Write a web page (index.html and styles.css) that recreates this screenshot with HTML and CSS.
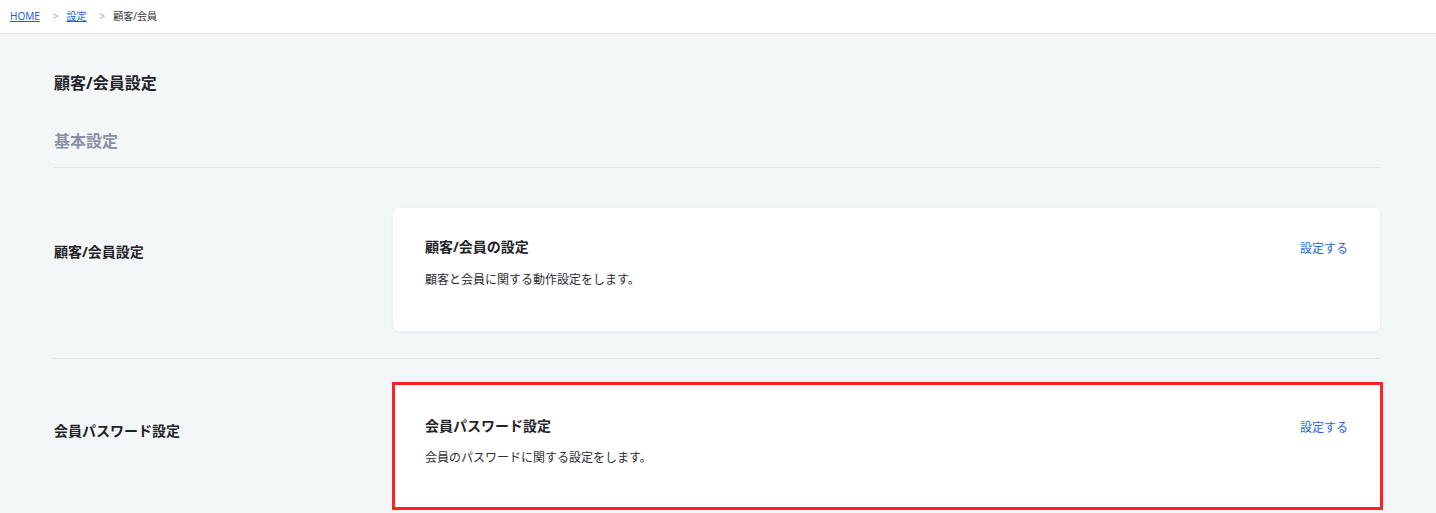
FILE: index.html
```html
<!DOCTYPE html>
<html lang="ja">
<head>
<meta charset="utf-8">
<title>顧客/会員設定</title>
<link rel="stylesheet" href="styles.css">
</head>
<body>
<nav class="crumbs">
  <a class="crumb-link" href="#">HOME</a>
  <span class="crumb-sep">&gt;</span>
  <a class="crumb-link" href="#">設定</a>
  <span class="crumb-sep">&gt;</span>
  <span class="crumb-current">顧客/会員</span>
</nav>
<main class="page">
  <h1 class="page-title">顧客/会員設定</h1>
  <h2 class="section-title">基本設定</h2>

  <section class="row row-first">
    <div class="row-label">顧客/会員設定</div>
    <div class="card">
      <div class="card-head">
        <h3 class="card-title">顧客/会員の設定</h3>
        <a class="card-link" href="#">設定する</a>
      </div>
      <p class="card-desc">顧客と会員に関する動作設定をします。</p>
    </div>
  </section>

  <section class="row row-second">
    <div class="row-label row-label-hl">会員パスワード設定</div>
    <div class="card card-hl">
      <div class="card-head">
        <h3 class="card-title">会員パスワード設定</h3>
        <a class="card-link" href="#">設定する</a>
      </div>
      <p class="card-desc card-desc-hl">会員のパスワードに関する設定をします。</p>
    </div>
  </section>
</main>
</body>
</html>
```
FILE: styles.css
```css
* { box-sizing: border-box; }
html, body { margin: 0; padding: 0; }
body {
  font-family: "Noto Sans", "Noto Sans CJK JP", sans-serif;
  background: #f4f7f8;
  color: #1f2329;
  overflow: hidden;
}
.crumbs {
  height: 34px;
  background: #fff;
  border-bottom: 1px solid #dfe1e6;
  display: flex;
  align-items: center;
  padding: 0 0 1px 10px;
  font-size: 10px;
  line-height: 14px;
}
.crumb-link { color: #1a5fd6; text-decoration: underline; }
.crumb-sep { color: #a0a4ac; margin: 0 8px 0 13px; }
.crumb-current { color: #333; }

.page { padding: 37px 56px 0 54px; }
.page-title {
  margin: 0;
  font-size: 16px;
  line-height: 24px;
  font-weight: 700;
  color: #1f2329;
}
.section-title {
  margin: 34px 0 0;
  padding-bottom: 14px;
  font-size: 16px;
  line-height: 24px;
  font-weight: 700;
  color: #8a91a6;
  border-bottom: 1px solid #e0e2e6;
}
.row {
  display: grid;
  grid-template-columns: 339px 1fr;
  align-items: start;
  border-bottom: 1px solid #e0e2e6;
}
.row-first { padding: 40px 0 27px; }
.row-second { padding: 23px 0 30px; }
.row-label {
  margin-top: 34px;
  font-size: 14px;
  line-height: 20px;
  font-weight: 700;
}
.row-label-hl { margin-top: 39px; }
.card {
  background: #fff;
  border-radius: 6px;
  box-shadow: 0 1px 4px rgba(30, 40, 60, 0.06);
  padding: 29px 32px 42px 32px;
}
.card-hl {
  border: 3px solid #ff2222;
  border-radius: 0;
  margin: 0 -3px 0 -1px;
  padding: 31px 32px 40px 30px;
  box-shadow: none;
}
.card-head {
  display: flex;
  justify-content: space-between;
  align-items: flex-start;
}
.card-title {
  margin: 0;
  font-size: 14px;
  line-height: 20px;
  font-weight: 700;
}
.card-link {
  margin-top: 3px;
  font-size: 12px;
  line-height: 18px;
  color: #1f66e0;
  text-decoration: none;
}
.card-desc {
  margin: 13px 0 0;
  font-size: 12px;
  line-height: 18px;
  color: #2a2e35;
}
.card-desc-hl { margin-top: 12px; }
```
